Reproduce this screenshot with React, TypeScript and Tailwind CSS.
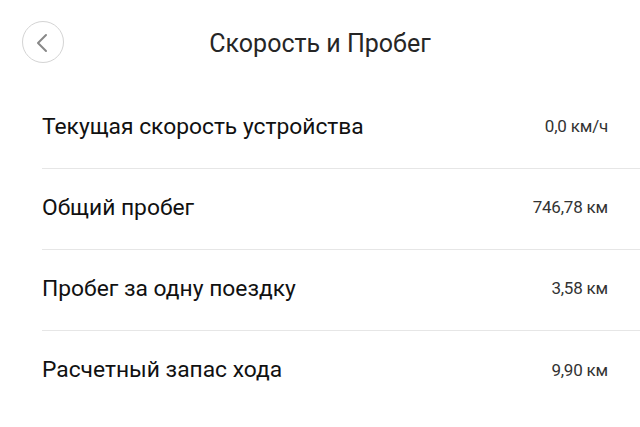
export default function App() {
  const rows = [
    { label: 'Текущая скорость устройства', value: '0,0 км/ч' },
    { label: 'Общий пробег', value: '746,78 км' },
    { label: 'Пробег за одну поездку', value: '3,58 км' },
    { label: 'Расчетный запас хода', value: '9,90 км' },
  ]

  return (
    <div className="w-[640px] h-[427px] bg-white overflow-hidden" style={{ fontFamily: 'Roboto, "Noto Sans", sans-serif' }}>
      <div className="relative h-[88px] flex items-center justify-center">
        <button className="absolute left-[22px] top-[21px] w-[42px] h-[42px] rounded-full border border-[#d4d4d4] flex items-center justify-center">
          <svg width="16" height="20" viewBox="0 0 16 20" fill="none" className="-ml-[3px] mt-[2px]">
            <path d="M12 2L4 10L12 18" stroke="#888" strokeWidth="2" strokeLinecap="round" strokeLinejoin="round" />
          </svg>
        </button>
        <h1 className="text-[25px] text-[#262626] -mt-[1px]">Скорость и Пробег</h1>
      </div>
      <div className="pl-[42px]">
        {rows.map((row, i) => (
          <div
            key={row.label}
            className={`h-[81px] flex items-center justify-between pr-[32px] ${i < rows.length - 1 ? 'border-b border-[#e6e6e6]' : ''}`}
          >
            <span className="text-[22.8px] text-[#111] -mt-[2px]">{row.label}</span>
            <span className="text-[17px] text-[#333] tracking-[-0.2px] -mt-[2px]">{row.value}</span>
          </div>
        ))}
      </div>
    </div>
  )
}
